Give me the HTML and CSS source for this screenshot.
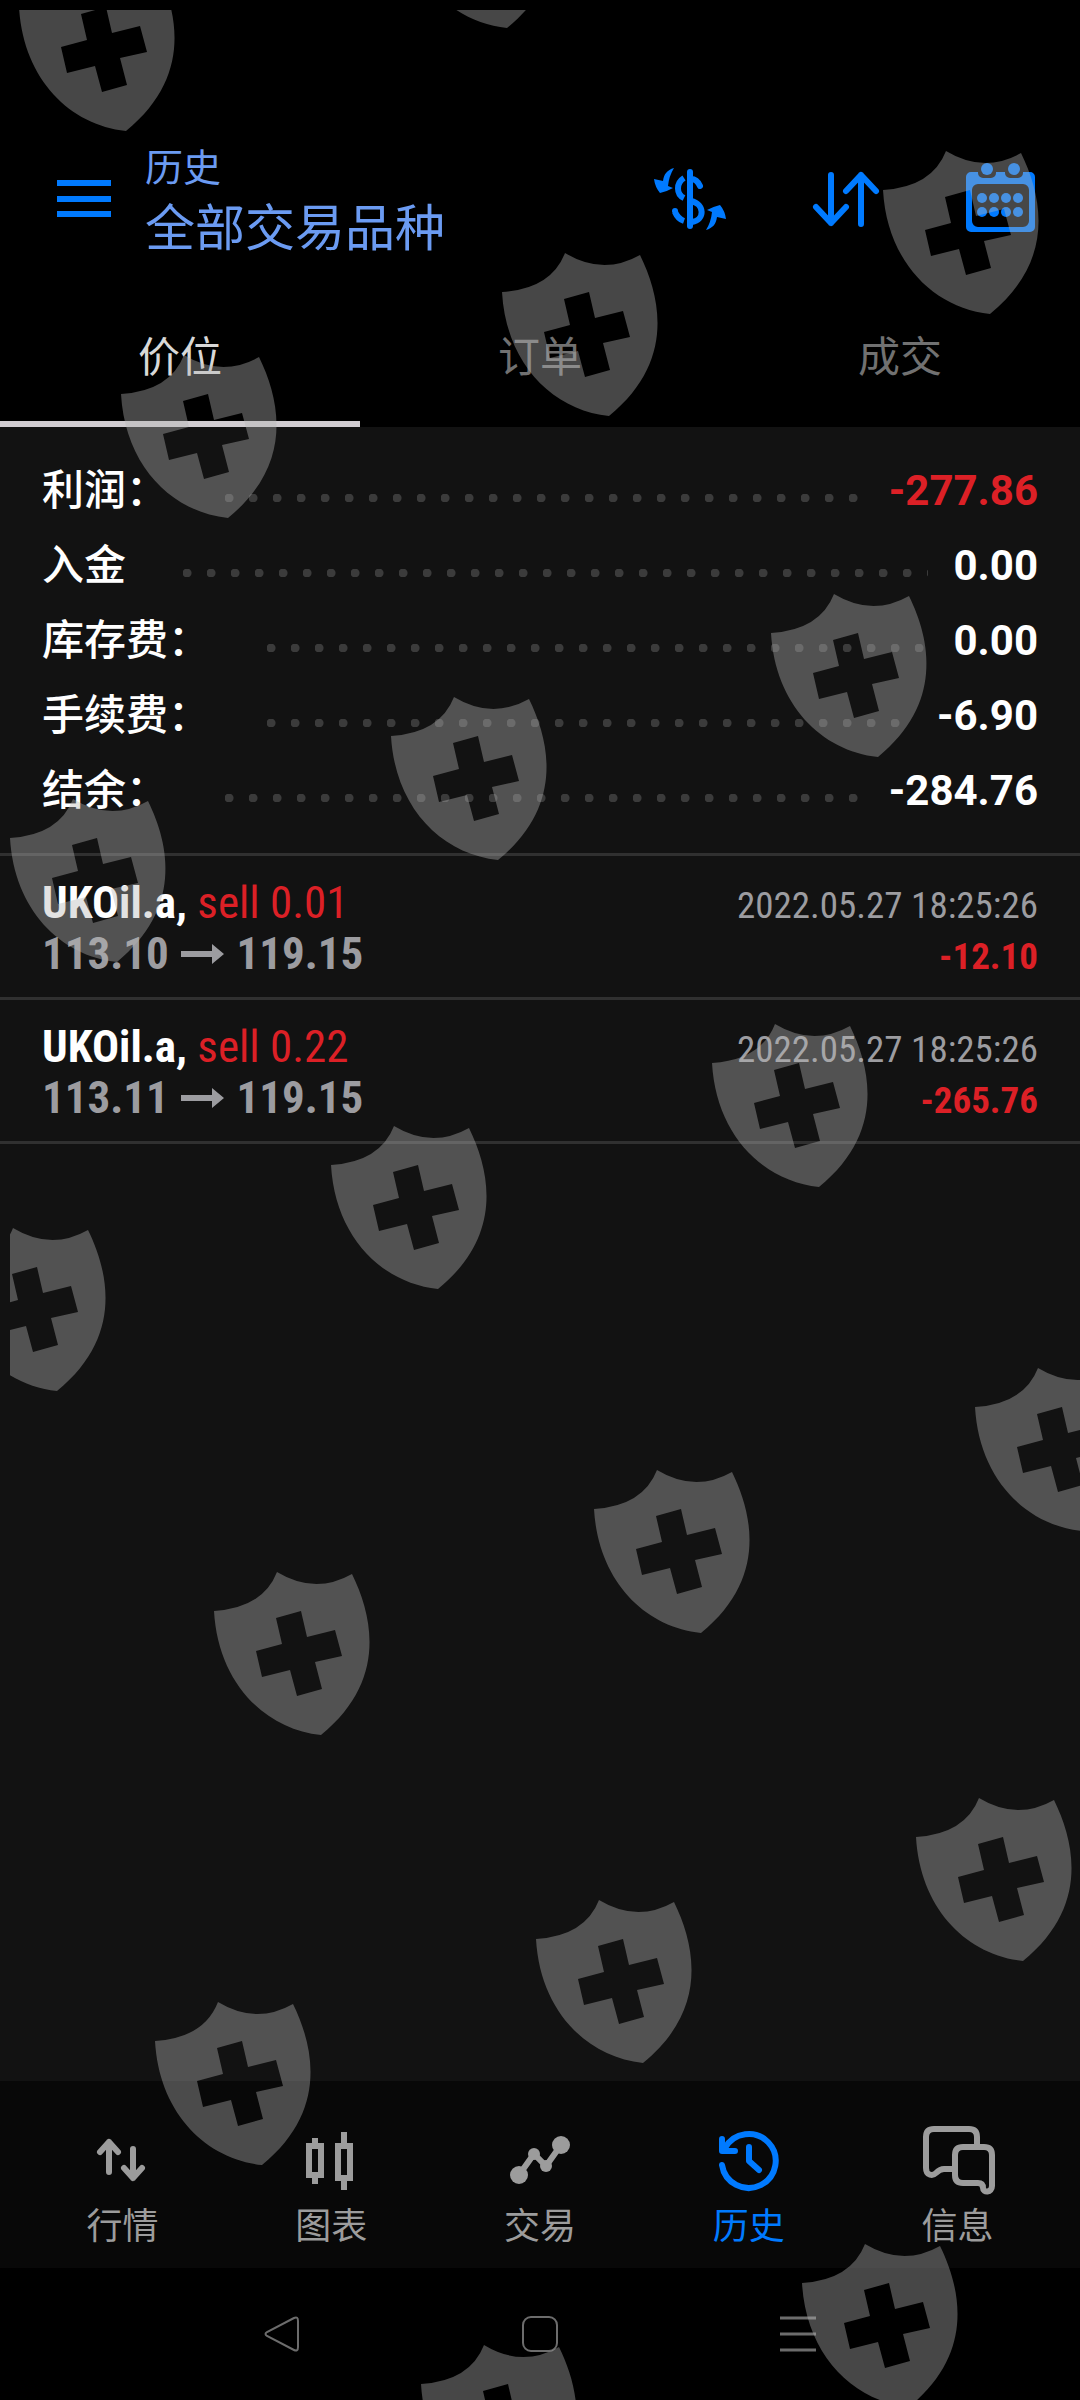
FILE: index.html
```html
<!DOCTYPE html>
<html lang="zh-CN">
<head>
<meta charset="utf-8">
<meta name="viewport" content="width=device-width, initial-scale=1">
<title>历史</title>
<link rel="stylesheet" href="styles.css">
</head>
<body>
<div class="app">
  <header class="top">
    <div class="toolbar">
      <button class="icon-button menu" type="button" aria-label="菜单">
        <svg width="54" height="38" viewBox="0 0 54 38"><path fill="currentColor" d="M0 0H54V6H0zM0 16H54V22H0zM0 31H54V37H0z"/></svg>
      </button>
      <div class="heading">
        <h1 class="title">历史</h1>
        <p class="subtitle">全部交易品种</p>
      </div>
      <div class="actions">
        <button class="icon-button" type="button" aria-label="货币">
          <svg class="icon" viewBox="0 0 72 72">
            <g fill="none" stroke="currentColor" stroke-width="6" stroke-linecap="round">
              <path d="M36 9V63"/>
              <path d="M37 16Q43 16 46 23"/>
              <path d="M37 38C51 41 51 57 38 59"/>
            </g>
            <g fill="none" stroke="currentColor" stroke-width="6">
              <path d="M30 15C22 20 22 31 30 35"/>
              <path d="M21 49Q24 56 30 58"/>
            </g>
            <circle cx="21" cy="48" r="3" fill="currentColor"/>
            <path fill="currentColor" d="M20 5C13 7 10 11 9 18L0 16Q1 24 6 30Q14 28 19 25L14 23Q15 13 20 5z"/>
            <path fill="currentColor" d="M52 67C59 65 62 61 63 54L72 56Q71 48 66 42Q58 44 53 47L58 49Q57 59 52 67z"/>
          </svg>
        </button>
        <button class="icon-button" type="button" aria-label="排序">
          <svg class="icon line" viewBox="0 0 72 72"><path d="M21 12V60M6 44L21 60L36 44M51 61V12M36 28L51 12L66 28"/></svg>
        </button>
        <button class="icon-button" type="button" aria-label="日期">
          <svg class="icon" viewBox="0 0 72 72">
            <path fill="currentColor" fill-rule="evenodd" d="M5 9H12V10a5 5 0 0 0 5 5h8a5 5 0 0 0 5-5V9H39V10a5 5 0 0 0 5 5h8a5 5 0 0 0 5-5V9H64a5 5 0 0 1 5 5V64a5 5 0 0 1-5 5H5a5 5 0 0 1-5-5V14a5 5 0 0 1 5-5zM12 21a6 6 0 0 0-6 6V58a6 6 0 0 0 6 6H57a6 6 0 0 0 6-6V27a6 6 0 0 0-6-6z"/>
            <g fill="currentColor">
              <circle cx="21" cy="6" r="6"/><circle cx="48" cy="6" r="6"/>
              <circle cx="16" cy="35" r="5"/><circle cx="28" cy="35" r="5"/><circle cx="40" cy="35" r="5"/><circle cx="52" cy="35" r="5"/>
              <circle cx="16" cy="49" r="5"/><circle cx="28" cy="49" r="5"/><circle cx="40" cy="49" r="5"/><circle cx="52" cy="49" r="5"/>
            </g>
          </svg>
        </button>
      </div>
    </div>
    <div class="tabs" role="tablist">
      <button class="tab tab-active" type="button" role="tab" aria-selected="true">价位</button>
      <button class="tab" type="button" role="tab" aria-selected="false">订单</button>
      <button class="tab" type="button" role="tab" aria-selected="false">成交</button>
    </div>
  </header>

  <main class="content">
    <dl class="summary">
      <div class="sum-row"><dt>利润：</dt><dd class="loss">-277.86</dd></div>
      <div class="sum-row"><dt>入金</dt><dd>0.00</dd></div>
      <div class="sum-row"><dt>库存费：</dt><dd>0.00</dd></div>
      <div class="sum-row"><dt>手续费：</dt><dd>-6.90</dd></div>
      <div class="sum-row"><dt>结余：</dt><dd>-284.76</dd></div>
    </dl>
    <ul class="trades">
      <li class="trade">
        <div class="trade-name"><strong>UKOil.a,</strong> <span class="loss">sell 0.01</span></div>
        <time class="trade-time">2022.05.27 18:25:26</time>
        <div class="trade-price">113.10
          <svg class="arrow" viewBox="0 0 43 20"><path fill="currentColor" d="M0 7H31V0L43 10L31 20V13H0z"/></svg>
          119.15</div>
        <div class="trade-profit loss">-12.10</div>
      </li>
      <li class="trade">
        <div class="trade-name"><strong>UKOil.a,</strong> <span class="loss">sell 0.22</span></div>
        <time class="trade-time">2022.05.27 18:25:26</time>
        <div class="trade-price">113.11
          <svg class="arrow" viewBox="0 0 43 20"><path fill="currentColor" d="M0 7H31V0L43 10L31 20V13H0z"/></svg>
          119.15</div>
        <div class="trade-profit loss">-265.76</div>
      </li>
    </ul>
  </main>

  <nav class="nav">
    <a class="nav-item" href="#quotes">
      <svg class="icon line" viewBox="0 0 72 72"><path d="M23 18V48M14 28L23 18L32 28M47 25V54M38 44L47 54L56 44"/></svg>
      行情</a>
    <a class="nav-item" href="#charts">
      <svg class="icon" viewBox="0 0 72 72"><path fill="currentColor" fill-rule="evenodd" d="M17 14H23V19H29V54H23V60H17V54H11V19H17zM17 25V48H23V25zM46 8H52V19H58V57H52V66H46V57H40V19H46zM46 25V51H52V25z"/></svg>
      图表</a>
    <a class="nav-item" href="#trade">
      <svg class="icon" viewBox="0 0 72 72"><path fill="none" stroke="currentColor" stroke-width="6" d="M15 51L30 30L42 42L57 21"/><g fill="currentColor"><circle cx="15" cy="51" r="9"/><circle cx="30" cy="30" r="6"/><circle cx="42" cy="42" r="6"/><circle cx="57" cy="21" r="9"/></g></svg>
      交易</a>
    <a class="nav-item nav-active" href="#history" aria-current="page">
      <svg class="icon line" viewBox="0 0 72 72"><path d="M9 41A27 27 0 1 0 12 24M9 15V27H22M36 23V37L46 46"/></svg>
      历史</a>
    <a class="nav-item" href="#messages">
      <svg class="icon line" viewBox="0 0 72 72"><path d="M55 21V13Q55 5 47 5H12Q4 5 4 13V44C4 52 11 52 14 49Q18 45 22 45H31M41 23H62Q70 23 70 31V62C70 69 61 69 61 64Q61 59 56 59H41Q33 59 33 51V31Q33 23 41 23z"/></svg>
      信息</a>
  </nav>

  <div class="system">
    <button class="system-button" type="button" aria-label="返回"><svg width="36" height="36" viewBox="0 0 36 36"><path d="M30 2Q34 0 34 5V31Q34 36 30 34L3 20Q0 18 3 16z"/></svg></button>
    <button class="system-button" type="button" aria-label="主页"><svg width="36" height="36" viewBox="0 0 36 36"><rect x="1" y="1" width="34" height="34" rx="8"/></svg></button>
    <button class="system-button" type="button" aria-label="最近任务"><svg width="36" height="36" viewBox="0 0 36 36"><path stroke-width="3" d="M0 2H36M0 18H36M0 34H36"/></svg></button>
  </div>

  <svg class="watermark" aria-hidden="true">
    <defs>
      <path id="shield" fill-rule="evenodd" d="M0 0Q38 23 75 2C97 47 109 110 44 163C-13 157-59 110-63 39Q-14 36 0 0zM-1 46L5 72L-21 79L-15 105L13 98L20 124L45 117L38 90L65 84L58 58L30 65L24 39z"/>
      <clipPath id="edge"><rect x="10" y="10" width="100%" height="100%"/></clipPath>
    </defs>
    <g clip-path="url(#edge)">
      <use href="#shield" x="82" y="-32"/><use href="#shield" x="463" y="-135"/>
      <use href="#shield" x="184" y="355"/><use href="#shield" x="565" y="253"/><use href="#shield" x="946" y="151"/>
      <use href="#shield" x="73" y="799"/><use href="#shield" x="454" y="697"/><use href="#shield" x="834" y="594"/>
      <use href="#shield" x="13" y="1228"/><use href="#shield" x="394" y="1126"/><use href="#shield" x="775" y="1024"/>
      <use href="#shield" x="277" y="1572"/><use href="#shield" x="657" y="1470"/><use href="#shield" x="1038" y="1368"/>
      <use href="#shield" x="218" y="2002"/><use href="#shield" x="599" y="1900"/><use href="#shield" x="979" y="1798"/>
      <use href="#shield" x="484" y="2345"/><use href="#shield" x="865" y="2244"/>
    </g>
  </svg>
</div>
</body>
</html>
```
FILE: styles.css
```css
* {
  box-sizing: border-box;
}

body {
  margin: 0;
  background: #000;
  color: #fff;
  font-family: Roboto, "Noto Sans CJK SC", sans-serif;
}

h1, p, dl, dd, ul {
  margin: 0;
  padding: 0;
}

button {
  margin: 0;
  padding: 0;
  border: 0;
  background: none;
  color: inherit;
  font: inherit;
}

svg {
  display: block;
}

.app {
  position: relative;
  display: flex;
  flex-direction: column;
  min-height: 100vh;
  overflow: hidden;
}

.icon {
  width: 72px;
  height: 72px;
  overflow: visible;
}

.line {
  fill: none;
  stroke: currentColor;
  stroke-width: 6px;
  stroke-linecap: round;
  stroke-linejoin: round;
}

.loss {
  color: #dc2026;
}

/* Header */
.top {
  padding-top: 136px;
}

.toolbar {
  display: flex;
  align-items: center;
  padding: 0 42px 24px 57px;
}

.icon-button {
  color: #007aff;
}

.heading {
  flex: 1;
  margin-left: 34px;
  padding-top: 4px;
  color: #6b9bf2;
}

.title {
  font-size: 38px;
  font-weight: 400;
  line-height: 56px;
}

.subtitle {
  font-size: 50px;
  line-height: 66px;
}

.actions {
  display: flex;
  gap: 84px;
}

.tabs {
  display: flex;
}

.tab {
  flex: 1;
  height: 141px;
  border-bottom: 6px solid transparent;
  color: #717171;
  font-size: 42px;
}

.tab-active {
  border-color: #d0ccd0;
  color: #d8d8d8;
}

/* Totals */
.content {
  flex: 1;
  background: #121212;
}

.summary {
  padding: 26px 42px 25px;
  border-bottom: 3px solid #303030;
}

.sum-row {
  display: flex;
  align-items: center;
  height: 75px;
  font-size: 42px;
  line-height: 75px;
}

.sum-row dt {
  font-weight: 500;
}

.sum-row dd {
  display: flex;
  flex: 1;
  font-weight: 700;
}

.sum-row dd::before {
  content: "";
  flex: 1;
  height: 8px;
  margin: 41px 26px 0 57px;
  background: radial-gradient(circle at 4px 4px, #3b3b3b 4px, transparent 5px) 0 0 / 24px 8px;
}

/* Closed positions */
.trades {
  list-style: none;
}

.trade {
  display: grid;
  grid-template-columns: 1fr auto;
  align-items: baseline;
  padding: 21px 42px 18px;
  border-bottom: 3px solid #303030;
  color: #9c9ca0;
  font-family: "Roboto Condensed", Roboto, sans-serif;
}

.trade-name,
.trade-price {
  font-size: 45px;
  line-height: 51px;
}

.trade-name {
  color: #fff;
}

.trade-price,
.trade-profit {
  font-weight: 700;
}

.trade-time,
.trade-profit {
  font-size: 37px;
  line-height: 42px;
  text-align: right;
}

.arrow {
  display: inline-block;
  width: 43px;
  height: 20px;
  margin: 0 2px;
  vertical-align: 5px;
}

/* Bottom navigation */
.nav {
  display: flex;
  padding: 43px 18px 10px;
  background: #080808;
}

.nav-item {
  display: flex;
  flex: 1;
  flex-direction: column;
  align-items: center;
  color: #9c9c9c;
  font-size: 36px;
  line-height: 62px;
  text-decoration: none;
}

.nav-active {
  color: #007aff;
}

.system {
  display: flex;
  justify-content: center;
  gap: 222px;
  padding: 48px 0;
}

.system-button svg {
  fill: none;
  stroke: #6c6c6c;
  stroke-width: 2px;
}

.watermark {
  position: absolute;
  inset: 0;
  width: 100%;
  height: 100%;
  fill: #b6b6b6;
  opacity: 0.39;
  pointer-events: none;
}
```
